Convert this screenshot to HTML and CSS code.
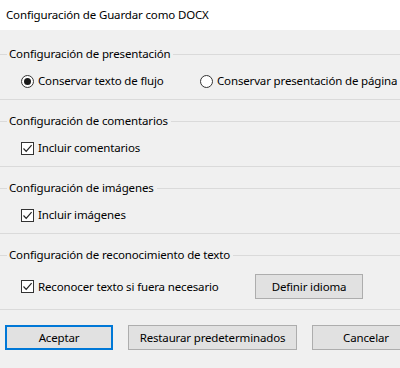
FILE: index.html
```html
<!DOCTYPE html>
<html lang="es">
<head>
    <meta charset="UTF-8">
    <title>Configuración de Guardar como DOCX</title>
    <link rel="stylesheet" href="styles.css">
</head>
<body>
    <div class="dialog">
        <div class="titlebar">Configuración de Guardar como DOCX</div>

        <div class="content">
            <!-- presentación -->
            <div class="group first">
                <div class="legend"><span>Configuración de presentación</span></div>
                <div class="row">
                    <label class="option wide"><span class="radio checked"></span>Conservar texto de flujo</label>
                    <label class="option"><span class="radio"></span>Conservar presentación de página</label>
                </div>
            </div>

            <!-- comentarios -->
            <div class="group">
                <div class="legend"><span>Configuración de comentarios</span></div>
                <div class="row">
                    <label class="option"><span class="check"><svg width="11" height="11" viewBox="0 0 11 11"><path d="M1.5 5.5 L4.2 8.3 L9.6 2.2" fill="none" stroke="#222" stroke-width="1.2"/></svg></span>Incluir comentarios</label>
                </div>
            </div>

            <!-- imágenes -->
            <div class="group">
                <div class="legend"><span>Configuración de imágenes</span></div>
                <div class="row">
                    <label class="option"><span class="check"><svg width="11" height="11" viewBox="0 0 11 11"><path d="M1.5 5.5 L4.2 8.3 L9.6 2.2" fill="none" stroke="#222" stroke-width="1.2"/></svg></span>Incluir imágenes</label>
                </div>
            </div>

            <!-- reconocimiento -->
            <div class="group">
                <div class="legend"><span>Configuración de reconocimiento de texto</span></div>
                <div class="row">
                    <label class="option ocr"><span class="check"><svg width="11" height="11" viewBox="0 0 11 11"><path d="M1.5 5.5 L4.2 8.3 L9.6 2.2" fill="none" stroke="#222" stroke-width="1.2"/></svg></span>Reconocer texto si fuera necesario</label>
                    <button class="btn">Definir idioma</button>
                </div>
            </div>

            <div class="actions">
                <button class="btn default">Aceptar</button>
                <button class="btn restore">Restaurar predeterminados</button>
                <button class="btn">Cancelar</button>
            </div>
        </div>
    </div>
</body>
</html>
```

FILE: styles.css
```css
body {
    margin: 0;
    width: 400px;
    height: 368px;
    overflow: hidden;
    font-family: "Noto Sans", "Open Sans", sans-serif;
    font-size: 11.5px;
    letter-spacing: -0.15px;
    color: #000;
    background-color: #f0f0f0;
}
.titlebar {
    height: 30px;
    line-height: 30px;
    padding-left: 6px;
    background-color: #fff;
}
.group {
    padding: 13px 0 10px 0;
    border-bottom: 1px solid #dadada;
}
.group.first {
    padding-top: 16px;
}
.legend {
    display: flex;
    align-items: center;
    height: 16px;
    line-height: 16px;
}
.legend::before {
    content: "";
    width: 7px;
    height: 1px;
    margin-right: 2px;
    background-color: #dadada;
}
.legend::after {
    content: "";
    flex: 1;
    height: 1px;
    margin-left: 3px;
    background-color: #dadada;
}
.legend span {
    white-space: nowrap;
}
.row {
    display: flex;
    align-items: center;
    margin-top: 11px;
    padding-left: 21px;
    min-height: 16px;
}
.option {
    display: flex;
    align-items: center;
    gap: 4px;
    line-height: 16px;
    white-space: nowrap;
}
.option.wide {
    width: 179px;
}
.option.ocr {
    width: 234px;
}
.radio {
    width: 11px;
    height: 11px;
    border: 1px solid #333;
    border-radius: 50%;
    background-color: #fff;
    display: flex;
    align-items: center;
    justify-content: center;
}
.radio.checked::after {
    content: "";
    width: 7px;
    height: 7px;
    border-radius: 50%;
    background-color: #1a1a1a;
}
.check {
    width: 11px;
    height: 11px;
    border: 1px solid #333;
    background-color: #fff;
    display: flex;
}
.btn {
    height: 25px;
    width: 108px;
    padding: 0;
    font-family: inherit;
    font-size: 11.5px;
    letter-spacing: -0.15px;
    color: #000;
    background-color: #e1e1e1;
    border: 1px solid #adadad;
    flex-shrink: 0;
}
.btn.default {
    border: 2px solid #0078d7;
}
.btn.restore {
    width: 169px;
}
.actions {
    display: flex;
    gap: 15px;
    padding: 15px 0 0 5px;
}
```
